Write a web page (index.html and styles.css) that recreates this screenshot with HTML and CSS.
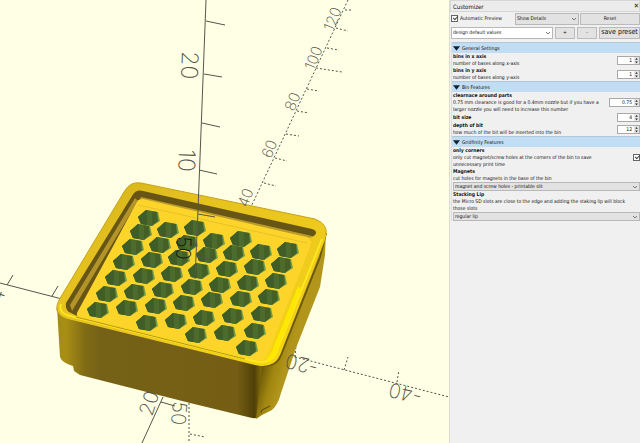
FILE: index.html
```
<!DOCTYPE html>
<html lang="en">
<head>
<meta charset="utf-8">
<title>Customizer</title>
<link rel="stylesheet" href="styles.css">
</head>
<body>
<main class="workspace">
<section class="viewport" aria-label="3D view">
<svg class="scene" viewBox="0 0 449 443" preserveAspectRatio="xMinYMin slice">
  <defs>
    <linearGradient id="front" gradientUnits="userSpaceOnUse" x1="57" y1="0" x2="274" y2="0">
      <stop offset="0" stop-color="#a38a14"/><stop offset=".04" stop-color="#a88f14"/><stop offset=".13" stop-color="#806b16"/><stop offset=".2" stop-color="#756217"/><stop offset=".83" stop-color="#755e14"/><stop offset=".91" stop-color="#4f4108"/><stop offset=".95" stop-color="#8d750d"/><stop offset="1" stop-color="#9c8210"/>
    </linearGradient>
    <linearGradient id="side" gradientUnits="userSpaceOnUse" x1="262" y1="370" x2="284" y2="376">
      <stop offset="0" stop-color="#6e5b0a"/><stop offset=".5" stop-color="#a0860f"/><stop offset="1" stop-color="#b2961c"/>
    </linearGradient>
    <linearGradient id="rim" x1="0" y1="0" x2="1" y2="1">
      <stop offset="0" stop-color="#cfae16"/><stop offset=".25" stop-color="#e3c01f"/><stop offset=".7" stop-color="#f0cc1d"/><stop offset="1" stop-color="#f8dc08"/>
    </linearGradient>
    <g id="hex">
      <path fill="#6f9a4c" d="M-11-1-3-8 9-6 11 3 3 8-8 6Z"/>
      <path fill="#446027" d="M-11-1-3-8 8-6 9 3 3 8-8 6Z"/>
      <path fill="#4b6c2d" d="M-2-7 3-7V8L-2 7Z"/>
      <path fill="#3f5d26" d="M-11-1-3-8-2 7-8 6Z"/>
    </g>
  </defs>
  <rect width="449" height="443" fill="#ffffe5"/>

  <g class="axis">
    <path d="M0 283 62 299M7 285 13 275M52 296 58 286M163 397 142 443M161 402 175 406"/>
    <path class="dots" d="M348 0 250 209M345 10H352M336 28 348 31M327 48 339 50M316 68 342 72M307 89 319 91M297 111 309 113M286 134 299 136M275 158 287 161M264 183 276 186M295 357 449 397M344 370 348 357M397 382 399 370M295 357 296 345M189 403V443M190 434 205 437"/>
  </g>

  <path fill="url(#front)" d="M57 307 60 357Q62 363 73 366L74 371 80 375 190 403 252 418Q259 419 261 414L274 362Z"/>
  <path fill="url(#side)" d="M262 364 256 419 262 415 272 410Q278 405 281 393L296 348 320 287 325 255 326 232 278 358Z"/>
  <path fill="none" stroke="#554609" d="M261 413 262 410 270 406"/>
  <path fill="none" stroke="#6b5a0d" stroke-width="2" d="M267 366Q278 364 281 355L320 257 326 233"/>
  <path fill="url(#rim)" d="M141 183Q130 181 124 192L59 300Q53 315 68 319L255 365Q274 369 280 355L325 240Q330 225 315 219Z"/>
  <path fill="none" stroke="#c5a315" d="M141 183Q130 181 124 192L59 300Q55 308 58 313M141 183 315 219Q328 224 326 235"/>
  <path fill="none" stroke="#ffe81c" stroke-width="2" d="M61 304Q58 313 70 316L254 361Q271 365 276 353L322 239"/>
  <path fill="none" stroke="#ffe800" stroke-width="4" stroke-linecap="round" d="M269 359Q272 357 274 352L299 289"/>
  <path fill="#675516" d="M143 191Q136 189 132 196L66 303Q65 309 69 312L77 316 138 200 143 199 306 236Q313 238 315 235 318 231 312 229Z"/>
  <path fill="#b39429" d="M135 198 70 305 72 311 138 201Z"/>
  <path fill="#bb9c29" d="M141 197 312 236 311 238 139 201Z"/>
  <path fill="#fdd52a" d="M137 202Q139 199 143 199L306 237Q313 239 310 247L267 356Q263 362 255 360L79 317Q75 316 78 311Z"/>
  <path fill="none" stroke="#e8c128" d="M138 205 307 243"/>
  <path fill="none" stroke="#b59718" d="M76 317 245 359"/>
  <g>
    <use href="#hex" x="149" y="218"/>
    <use href="#hex" x="141" y="232"/><use href="#hex" x="168" y="230"/><use href="#hex" x="195" y="228"/>
    <use href="#hex" x="133" y="247"/><use href="#hex" x="160" y="245"/><use href="#hex" x="187" y="243"/><use href="#hex" x="214" y="241"/><use href="#hex" x="241" y="239"/>
    <use href="#hex" x="124" y="262"/><use href="#hex" x="152" y="260"/><use href="#hex" x="179" y="258"/><use href="#hex" x="207" y="255"/><use href="#hex" x="234" y="253"/><use href="#hex" x="261" y="252"/><use href="#hex" x="288" y="250"/>
    <use href="#hex" x="116" y="278"/><use href="#hex" x="144" y="276"/><use href="#hex" x="172" y="274"/><use href="#hex" x="199" y="271"/><use href="#hex" x="227" y="269"/><use href="#hex" x="255" y="267"/><use href="#hex" x="282" y="265"/>
    <use href="#hex" x="107" y="294"/><use href="#hex" x="135" y="292"/><use href="#hex" x="163" y="290"/><use href="#hex" x="192" y="287"/><use href="#hex" x="220" y="285"/><use href="#hex" x="248" y="283"/><use href="#hex" x="276" y="281"/>
    <use href="#hex" x="98" y="310"/><use href="#hex" x="127" y="308"/><use href="#hex" x="156" y="306"/><use href="#hex" x="184" y="303"/><use href="#hex" x="212" y="300"/><use href="#hex" x="241" y="299"/><use href="#hex" x="269" y="297"/>
    <use href="#hex" x="147" y="323"/><use href="#hex" x="176" y="321"/><use href="#hex" x="204" y="318"/><use href="#hex" x="233" y="316"/><use href="#hex" x="262" y="314"/>
    <use href="#hex" x="196" y="335"/><use href="#hex" x="225" y="333"/><use href="#hex" x="255" y="331"/>
    <use href="#hex" x="247" y="348"/>
  </g>
  <g class="axis">
    <path d="M206 0 198 210 195 279M206 21 225 25M204 74 222 77M202 123 220 127M199 170 217 174M198 214 215 217M196 256 213 260"/>
  </g>
  <g class="tick-labels">
    <text transform="translate(182 51) rotate(92)">20</text>
    <text transform="translate(179 149) rotate(92)">10</text>
    <text class="near over" transform="translate(177 236) rotate(92)">50</text>
    <text class="near" transform="translate(173 401) rotate(95)">50</text>
    <text class="near" transform="translate(152 417) rotate(-72)">20</text>
    <text transform="translate(1 305) rotate(-70)">4</text>
    <text class="near" transform="translate(319 361) rotate(193)">-20</text>
    <text class="near" transform="translate(423 390) rotate(193)">-40</text>
    <g class="far">
      <text transform="translate(333 32) rotate(-68)">120</text>
      <text transform="translate(314 71) rotate(-68)">100</text>
      <text transform="translate(294 112) rotate(-68)">80</text>
      <text transform="translate(271 159) rotate(-68)">60</text>
      <text transform="translate(247 208) rotate(-68)">40</text>
    </g>
  </g>
</svg>
</section>

<aside class="panel">
  <header class="title"><h1>Customizer</h1><button class="close" aria-label="Close">✕</button></header>
  <div class="toolbar">
    <label class="auto"><input type="checkbox" checked>Automatic Preview</label>
    <span class="pick details"><select aria-label="Details"><option>Show Details</option></select><svg viewBox="0 0 6 4"><path d="M1 1 3 3 5 1"/></svg></span>
    <button class="btn reset">Reset</button>
  </div>
  <div class="toolbar presets">
    <span class="pick white"><select aria-label="Preset"><option>design default values</option></select><svg viewBox="0 0 6 4"><path d="M1 1 3 3 5 1"/></svg></span>
    <button class="btn small">+</button>
    <button class="btn small">-</button>
    <button class="btn save">save preset</button>
  </div>
  <div class="groups">
    <section>
      <h2><svg viewBox="0 0 6 4"><path d="M0 0H6L3 4Z"/></svg>General Settings</h2>
      <div class="field"><label for="bx"><b>bins in x axis</b>number of bases along x-axis</label><span class="spin"><input id="bx" value="1"><svg viewBox="0 0 5 8"><path d="M1 3 2.5 1 4 3ZM1 5H4L2.500 7Z"/></svg></span></div>
      <div class="field"><label for="by"><b>bins in y axis</b>number of bases along y-axis</label><span class="spin"><input id="by" value="1"><svg viewBox="0 0 5 8"><path d="M1 3 2.5 1 4 3ZM1 5H4L2.500 7Z"/></svg></span></div>
    </section>
    <section>
      <h2><svg viewBox="0 0 6 4"><path d="M0 0H6L3 4Z"/></svg>Bin Features</h2>
      <div class="field"><label for="cl"><b>clearnace around parts</b>0.75 mm clearance is good for a 0.4mm nozzle but if you have a larger nozzle you will need to increase this number</label><span class="spin wide"><input id="cl" value="0.75"><svg viewBox="0 0 5 8"><path d="M1 3 2.5 1 4 3ZM1 5H4L2.500 7Z"/></svg></span></div>
      <div class="field single"><label for="bs"><b>bit size</b></label><span class="spin"><input id="bs" value="4"><svg viewBox="0 0 5 8"><path d="M1 3 2.5 1 4 3ZM1 5H4L2.500 7Z"/></svg></span></div>
      <div class="field"><label for="db"><b>depth of bit</b>how much of the bit will be inserted into the bin</label><span class="spin"><input id="db" value="12"><svg viewBox="0 0 5 8"><path d="M1 3 2.5 1 4 3ZM1 5H4L2.500 7Z"/></svg></span></div>
    </section>
    <section>
      <h2><svg viewBox="0 0 6 4"><path d="M0 0H6L3 4Z"/></svg>Gridfinity Features</h2>
      <div class="field"><label class="narrow" for="oc"><b>only corners</b>only cut magnet/screw holes at the corners of the bin to save unnecessary print time</label><input id="oc" type="checkbox" checked></div>
      <div class="stack"><label for="mg"><b>Magnets</b>cut holes for magnets in the base of the bin</label><span class="pick"><select id="mg"><option>magnet and screw holes - printable slit</option></select><svg viewBox="0 0 6 4"><path d="M1 1 3 3 5 1"/></svg></span></div>
      <div class="stack"><label for="sl"><b>Stacking Lip</b>the Micro SD slots are close to the edge and adding the staking lip will block those slots</label><span class="pick"><select id="sl"><option>regular lip</option></select><svg viewBox="0 0 6 4"><path d="M1 1 3 3 5 1"/></svg></span></div>
    </section>
  </div>
</aside>
</main>
</body>
</html>
```
FILE: styles.css
```
* { box-sizing: border-box; }
body { margin: 0; background: #f0f0f0; color: #111; font: 5px/7px "DejaVu Sans Condensed", "DejaVu Sans", sans-serif; overflow: hidden; }
button, input, select { font: inherit; color: inherit; margin: 0; }
h1, h2 { margin: 0; font-size: 5px; font-weight: 400; }
.workspace { display: grid; grid-template-columns: 449fr 191fr; min-height: 100vh; }
.viewport { background: #ffffe5; overflow: hidden; }
.scene { display: block; width: 100%; height: 100vh; }
.axis path { fill: none; stroke: #55554b; stroke-width: 1; }
.axis .dots { stroke-dasharray: 2 2; }
.tick-labels { font-family: Inter, "Open Sans", sans-serif; font-size: 23px; font-weight: 200; fill: #55554b; }
.near { font-size: 20px; }
.over { fill: #111; }
.far { font-size: 15px; }

.panel { min-width: 0; overflow: hidden; border-left: 1px solid #dcdcd4; }
.title { display: flex; justify-content: space-between; align-items: center; height: 12px; padding-left: 2px; border: 1px solid #d6d6d6; background: #ececec; }
.title h1 { font-size: 6px; }
.close { border: 0; padding: 0; background: none; font-size: 7px; }
.toolbar { display: flex; align-items: center; gap: 1px; height: 13px; padding-left: 1px; }
.presets { height: 15px; gap: 2px; }
.auto { display: flex; align-items: center; gap: 2px; flex: 0 0 63px; white-space: nowrap; }
input[type="checkbox"] { appearance: none; flex: none; width: 7px; height: 7px; border: 1px solid #666; background: #fff; position: relative; }
input[type="checkbox"]::after { content: ""; position: absolute; left: 1px; top: 0; width: 4px; height: 2px; border: solid #444; border-width: 0 0 1px 1px; transform: rotate(-45deg); }
.btn { height: 12px; padding: 0; border: 1px solid #bbb; background: #e2e2e2; white-space: nowrap; }
.reset { flex: 1; }
.small { flex: 0 0 20px; }
.save { flex: 1; min-width: 0; font-size: 7px; }
.pick { position: relative; display: block; height: 9px; border: 1px solid #b8b8b8; background: #e2e2e2; }
.pick select { display: block; appearance: none; width: 100%; height: 100%; padding: 0 8px 0 1px; border: 0; background: none; line-height: 7px; }
.pick svg { position: absolute; right: 1px; top: 50%; width: 6px; height: 4px; margin-top: -2px; pointer-events: none; }
.pick path { fill: none; stroke: #777; stroke-width: 1; }
.details { flex: 0 0 64px; height: 12px; }
.white { flex: 0 0 102px; height: 12px; background: #fff; }
.groups { margin: 2px 0 0 1px; padding-left: 1px; border-left: 1px solid #ddd; }
h2 { display: flex; align-items: center; gap: 2px; height: 11px; margin-left: -1px; padding-left: 1px; background: #c0ddf3; border-top: 1px solid #b0c8da; }
h2 svg { width: 7px; height: 5px; fill: #123; }
.field { display: flex; justify-content: space-between; align-items: center; min-height: 13px; }
.field b, .stack b { display: block; }
.field label { flex: 1; min-width: 0; }
.single { min-height: 9px; }
.narrow { padding-right: 20px; }
.spin { display: flex; align-items: center; flex: 0 0 23px; height: 9px; border: 1px solid #aaa; background: #fff; }
.wide { flex-basis: 31px; }
.spin input { flex: 1; min-width: 0; width: 10px; height: 7px; padding: 0 2px 0 0; border: 0; background: none; text-align: right; line-height: 7px; }
.spin svg { flex: none; width: 5px; height: 7px; fill: #222; background: #e4e4e4; }
.stack label { display: block; padding-right: 6px; }
```
